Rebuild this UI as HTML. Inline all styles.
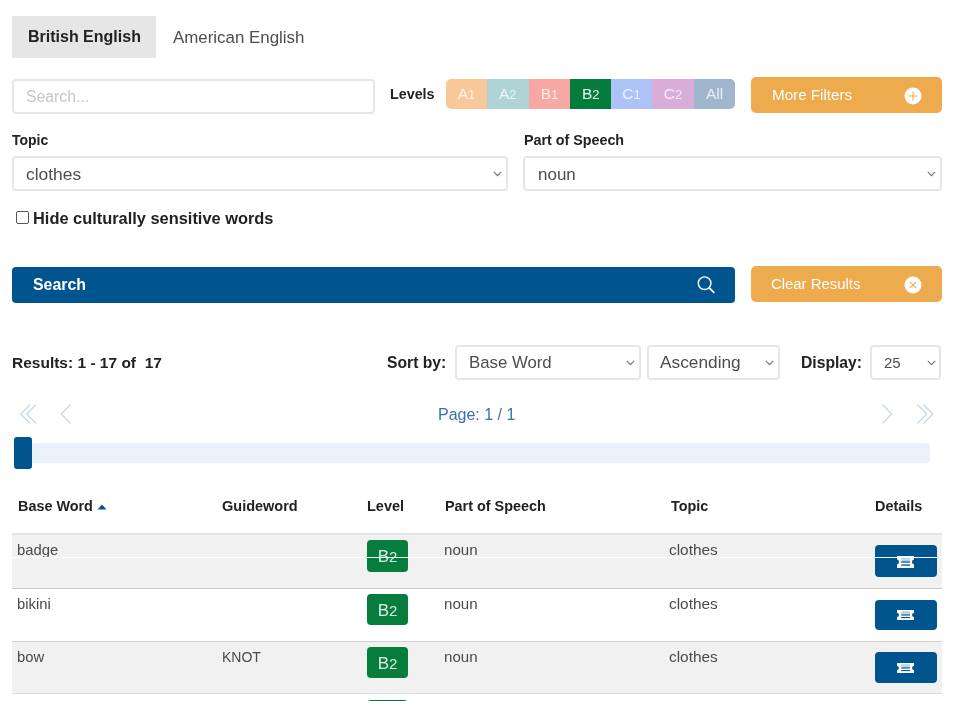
<!DOCTYPE html>
<html><head><meta charset="utf-8">
<style>
html,body{margin:0;padding:0;background:#fff;}
body{width:957px;height:701px;position:relative;overflow:hidden;font-family:"Liberation Sans",sans-serif;}
.t{position:absolute;line-height:1;white-space:pre;will-change:transform;}
.b{position:absolute;box-sizing:border-box;}
</style></head><body>
<div class="b" style="left:12px;top:16px;width:144px;height:41.5px;background:#e6e6e6;"></div>
<div class="t" style="left:28.0px;top:29px;font-size:16px;font-weight:700;color:#222;">British English</div>
<div class="t" style="left:173.0px;top:30px;font-size:16.9px;font-weight:400;color:#4d4d4d;">American English</div>
<div class="b" style="left:12px;top:79px;width:363px;height:35px;border:2px solid #e6e6e6;border-radius:4px;"></div>
<div class="t" style="left:26.0px;top:89px;font-size:15.8px;font-weight:400;color:#c6c6c6;">Search...</div>
<div class="t" style="left:390.0px;top:87px;font-size:14.3px;font-weight:700;color:#222;">Levels</div>
<div class="b" style="left:446px;top:79px;width:41px;height:30px;background:#f9c89a;border-radius:5px 0 0 5px;"></div>
<div class="t" style="left:446px;top:86px;width:41px;text-align:center;font-size:15.5px;color:rgba(255,255,255,0.78)">A<span style="font-size:13px">1</span></div>
<div class="b" style="left:487px;top:79px;width:41.5px;height:30px;background:#aed4d8;"></div>
<div class="t" style="left:487px;top:86px;width:41.5px;text-align:center;font-size:15.5px;color:rgba(255,255,255,0.78)">A<span style="font-size:13px">2</span></div>
<div class="b" style="left:528.5px;top:79px;width:41.0px;height:30px;background:#f7a8a4;"></div>
<div class="t" style="left:528.5px;top:86px;width:41.0px;text-align:center;font-size:15.5px;color:rgba(255,255,255,0.78)">B<span style="font-size:13px">1</span></div>
<div class="b" style="left:569.5px;top:79px;width:41.5px;height:30px;background:#047c3c;"></div>
<div class="t" style="left:569.5px;top:86px;width:41.5px;text-align:center;font-size:15.5px;color:rgba(255,255,255,0.92)">B<span style="font-size:13px">2</span></div>
<div class="b" style="left:611px;top:79px;width:41px;height:30px;background:#adc2f7;"></div>
<div class="t" style="left:611px;top:86px;width:41px;text-align:center;font-size:15.5px;color:rgba(255,255,255,0.78)">C<span style="font-size:13px">1</span></div>
<div class="b" style="left:652px;top:79px;width:42px;height:30px;background:#d8aed8;"></div>
<div class="t" style="left:652px;top:86px;width:42px;text-align:center;font-size:15.5px;color:rgba(255,255,255,0.78)">C<span style="font-size:13px">2</span></div>
<div class="b" style="left:694px;top:79px;width:41px;height:30px;background:#a0b6cc;border-radius:0 5px 5px 0;"></div>
<div class="t" style="left:694px;top:86px;width:41px;text-align:center;font-size:15.5px;color:rgba(255,255,255,0.78)">All</div>
<div class="b" style="left:751px;top:77px;width:191px;height:36px;background:#eeab4d;border-radius:5px;"></div>
<div class="t" style="left:771.5px;top:87px;font-size:15.2px;font-weight:400;color:#fff;">More Filters</div>
<svg class="b" style="left:904px;top:87px" width="18" height="18" viewBox="0 0 18 18"><circle cx="9" cy="9" r="8.5" fill="#fff"/><path d="M9 4.5V13.5M4.5 9H13.5" stroke="#eeab4d" stroke-width="1.05"/></svg>
<div class="t" style="left:12.0px;top:133px;font-size:14px;font-weight:700;color:#222;">Topic</div>
<div class="b" style="left:12px;top:156px;width:496px;height:35px;border:2px solid #e6e6e6;border-radius:4px;"></div>
<div class="t" style="left:26.0px;top:166px;font-size:17.4px;font-weight:400;color:#4d4d4d;">clothes</div>
<svg class="b" style="left:493px;top:171px" width="9" height="6" viewBox="0 0 9 6"><path d="M0.8 0.8 L4.5 4.6 L8.2 0.8" fill="none" stroke="#777" stroke-width="1.2"/></svg>
<div class="t" style="left:523.5px;top:133px;font-size:14.3px;font-weight:700;color:#222;">Part of Speech</div>
<div class="b" style="left:523px;top:156px;width:419px;height:35px;border:2px solid #e6e6e6;border-radius:4px;"></div>
<div class="t" style="left:537.5px;top:166px;font-size:17px;font-weight:400;color:#4d4d4d;">noun</div>
<svg class="b" style="left:927px;top:171px" width="9" height="6" viewBox="0 0 9 6"><path d="M0.8 0.8 L4.5 4.6 L8.2 0.8" fill="none" stroke="#777" stroke-width="1.2"/></svg>
<div class="b" style="left:16px;top:211px;width:13px;height:13px;border:1px solid #555;border-radius:2px;background:#fff;"></div>
<div class="t" style="left:33.0px;top:210px;font-size:16.4px;font-weight:700;color:#222;">Hide culturally sensitive words</div>
<div class="b" style="left:12px;top:267px;width:723px;height:36px;background:#00558e;border-radius:4px;"></div>
<div class="t" style="left:32.5px;top:277px;font-size:15.9px;font-weight:700;color:#fff;">Search</div>
<svg class="b" style="left:696px;top:275px" width="20" height="20" viewBox="0 0 20 20"><circle cx="8.6" cy="8.2" r="6.3" fill="none" stroke="#fff" stroke-width="1.4"/><path d="M13.2 12.8L17.8 17.3" stroke="#fff" stroke-width="1.8" stroke-linecap="round"/></svg>
<div class="b" style="left:751px;top:266px;width:191px;height:36px;background:#eeab4d;border-radius:5px;"></div>
<div class="t" style="left:771.0px;top:277px;font-size:14.9px;font-weight:400;color:#fff;">Clear Results</div>
<svg class="b" style="left:904px;top:275.5px" width="18" height="18" viewBox="0 0 18 18"><circle cx="9" cy="9" r="8.5" fill="#fff"/><path d="M5.8 5.8L12.2 12.2M12.2 5.8L5.8 12.2" stroke="#eeab4d" stroke-width="1.05"/></svg>
<div class="t" style="left:11.5px;top:355px;font-size:15.5px;font-weight:700;color:#222;">Results: 1 - 17 of  17</div>
<div class="t" style="left:387.0px;top:355px;font-size:15.7px;font-weight:700;color:#222;">Sort by:</div>
<div class="b" style="left:455.2px;top:344.5px;width:185.5px;height:35px;border:2px solid #e6e6e6;border-radius:4px;"></div>
<div class="t" style="left:468.5px;top:355px;font-size:16.8px;font-weight:400;color:#4d4d4d;">Base Word</div>
<svg class="b" style="left:626px;top:360px" width="9" height="6" viewBox="0 0 9 6"><path d="M0.8 0.8 L4.5 4.6 L8.2 0.8" fill="none" stroke="#777" stroke-width="1.2"/></svg>
<div class="b" style="left:647px;top:344.5px;width:133px;height:35px;border:2px solid #e6e6e6;border-radius:4px;"></div>
<div class="t" style="left:660.0px;top:354px;font-size:17.3px;font-weight:400;color:#4d4d4d;">Ascending</div>
<svg class="b" style="left:765px;top:360px" width="9" height="6" viewBox="0 0 9 6"><path d="M0.8 0.8 L4.5 4.6 L8.2 0.8" fill="none" stroke="#777" stroke-width="1.2"/></svg>
<div class="t" style="left:801.0px;top:355px;font-size:15.7px;font-weight:700;color:#222;">Display:</div>
<div class="b" style="left:869.5px;top:344.5px;width:71.5px;height:35px;border:2px solid #e6e6e6;border-radius:4px;"></div>
<div class="t" style="left:884.0px;top:355px;font-size:16px;font-weight:400;color:#4d4d4d;"><span style="font-size:15px">25</span></div>
<svg class="b" style="left:927px;top:360px" width="9" height="6" viewBox="0 0 9 6"><path d="M0.8 0.8 L4.5 4.6 L8.2 0.8" fill="none" stroke="#777" stroke-width="1.2"/></svg>
<svg class="b" style="left:18px;top:403px" width="60" height="22" viewBox="0 0 60 22"><path d="M12 1.5L2.8 11L12 20.5M18 1.5L8.8 11L18 20.5M52.5 1.5L43.3 11L52.5 20.5" fill="none" stroke="#c5d6ea" stroke-width="1.2"/></svg>
<svg class="b" style="left:880px;top:403px" width="60" height="22" viewBox="0 0 60 22"><path d="M2.5 1.5L11.7 11L2.5 20.5M37.5 1.5L46.7 11L37.5 20.5M43.5 1.5L52.7 11L43.5 20.5" fill="none" stroke="#c5d6ea" stroke-width="1.2"/></svg>
<div class="t" style="left:437.5px;top:407px;font-size:16px;font-weight:400;color:#3a70aa;">Page: 1 / 1</div>
<div class="b" style="left:14px;top:443px;width:916px;height:20px;background:#eaf1fc;border-radius:4px;"></div>
<div class="b" style="left:14px;top:437px;width:18px;height:32px;background:#00558e;border-radius:3px;"></div>
<div class="t" style="left:17.6px;top:499px;font-size:14.4px;font-weight:700;color:#222;">Base Word</div>
<svg class="b" style="left:97px;top:504px" width="10" height="6" viewBox="0 0 10 6"><path d="M0.5 5.5L5 0.5L9.5 5.5Z" fill="#00558e"/></svg>
<div class="t" style="left:221.8px;top:499px;font-size:14.5px;font-weight:700;color:#222;">Guideword</div>
<div class="t" style="left:366.7px;top:499px;font-size:14.5px;font-weight:700;color:#222;">Level</div>
<div class="t" style="left:444.5px;top:499px;font-size:14.4px;font-weight:700;color:#222;">Part of Speech</div>
<div class="t" style="left:670.5px;top:499px;font-size:14.4px;font-weight:700;color:#222;">Topic</div>
<div class="t" style="left:875.2px;top:499px;font-size:14.4px;font-weight:700;color:#222;">Details</div>
<div class="b" style="left:12px;top:533px;width:929.6px;height:55px;background:#f1f1f1;border-top:2px solid #e4e4e4;"></div>
<div class="t" style="left:17.0px;top:543px;font-size:14.8px;font-weight:400;color:#4a4a4a;">badge</div>
<div class="t" style="left:443.5px;top:542px;font-size:15.1px;font-weight:400;color:#4a4a4a;">noun</div>
<div class="t" style="left:669.0px;top:542px;font-size:15.4px;font-weight:400;color:#4a4a4a;">clothes</div>
<div class="b" style="left:367px;top:540px;width:41px;height:32px;background:#067d3c;border-radius:4px;"></div>
<div class="t" style="left:367px;top:548px;width:41px;text-align:center;font-size:17px;color:rgba(255,255,255,0.86)">B<span style="font-size:15px">2</span></div>
<div class="b" style="left:875px;top:545px;width:62px;height:32px;background:#00558e;border-radius:4px;"></div>
<svg class="b" style="left:897px;top:555.5px" width="17" height="12" viewBox="0 0 17 10" preserveAspectRatio="none"><path d="M0 0H17V3A2 2 0 0 0 17 7V10H0V7A2 2 0 0 0 0 3Z" fill="#fff"/><rect x="4.2" y="1.4" width="8.8" height="1.6" fill="#a9d1d9"/><rect x="4.2" y="3" width="8.8" height="1" fill="#c9dce8"/><rect x="4.2" y="4" width="8.8" height="1.8" fill="#5a87b6"/><rect x="4.2" y="7" width="8.8" height="1.1" fill="#00558e"/></svg>
<div class="b" style="left:12px;top:588px;width:929.6px;height:53px;background:#fff;border-top:1px solid #cbcbcb;"></div>
<div class="t" style="left:17.0px;top:597px;font-size:14.8px;font-weight:400;color:#4a4a4a;">bikini</div>
<div class="t" style="left:443.5px;top:596px;font-size:15.1px;font-weight:400;color:#4a4a4a;">noun</div>
<div class="t" style="left:669.0px;top:596px;font-size:15.4px;font-weight:400;color:#4a4a4a;">clothes</div>
<div class="b" style="left:367px;top:594px;width:41px;height:31px;background:#067d3c;border-radius:4px;"></div>
<div class="t" style="left:367px;top:602px;width:41px;text-align:center;font-size:17px;color:rgba(255,255,255,0.86)">B<span style="font-size:15px">2</span></div>
<div class="b" style="left:875px;top:600px;width:62px;height:30px;background:#00558e;border-radius:4px;"></div>
<svg class="b" style="left:897px;top:610.0px" width="17" height="10" viewBox="0 0 17 10" preserveAspectRatio="none"><path d="M0 0H17V3A2 2 0 0 0 17 7V10H0V7A2 2 0 0 0 0 3Z" fill="#fff"/><rect x="4.2" y="1.4" width="8.8" height="1.6" fill="#a9d1d9"/><rect x="4.2" y="3" width="8.8" height="1" fill="#c9dce8"/><rect x="4.2" y="4" width="8.8" height="1.8" fill="#5a87b6"/><rect x="4.2" y="7" width="8.8" height="1.1" fill="#00558e"/></svg>
<div class="b" style="left:12px;top:641px;width:929.6px;height:53px;background:#f1f1f1;border-top:1px solid #d0d0d0;"></div>
<div class="t" style="left:17.0px;top:650px;font-size:14.8px;font-weight:400;color:#4a4a4a;">bow</div>
<div class="t" style="left:221.5px;top:650px;font-size:14px;font-weight:400;color:#4a4a4a;">KNOT</div>
<div class="t" style="left:443.5px;top:649px;font-size:15.1px;font-weight:400;color:#4a4a4a;">noun</div>
<div class="t" style="left:669.0px;top:649px;font-size:15.4px;font-weight:400;color:#4a4a4a;">clothes</div>
<div class="b" style="left:367px;top:647px;width:41px;height:31px;background:#067d3c;border-radius:4px;"></div>
<div class="t" style="left:367px;top:655px;width:41px;text-align:center;font-size:17px;color:rgba(255,255,255,0.86)">B<span style="font-size:15px">2</span></div>
<div class="b" style="left:875px;top:652px;width:62px;height:31px;background:#00558e;border-radius:4px;"></div>
<svg class="b" style="left:897px;top:662.5px" width="17" height="10" viewBox="0 0 17 10" preserveAspectRatio="none"><path d="M0 0H17V3A2 2 0 0 0 17 7V10H0V7A2 2 0 0 0 0 3Z" fill="#fff"/><rect x="4.2" y="1.4" width="8.8" height="1.6" fill="#a9d1d9"/><rect x="4.2" y="3" width="8.8" height="1" fill="#c9dce8"/><rect x="4.2" y="4" width="8.8" height="1.8" fill="#5a87b6"/><rect x="4.2" y="7" width="8.8" height="1.1" fill="#00558e"/></svg>
<div class="b" style="left:12px;top:693px;width:929.6px;height:10px;background:#fff;border-top:1px solid #e0ddda;"></div>
<div class="b" style="left:367px;top:700px;width:41px;height:31px;background:#067d3c;border-radius:4px;"></div>
<div class="b" style="left:0px;top:557px;width:941px;height:1px;background:#fff;"></div>
</body></html>
